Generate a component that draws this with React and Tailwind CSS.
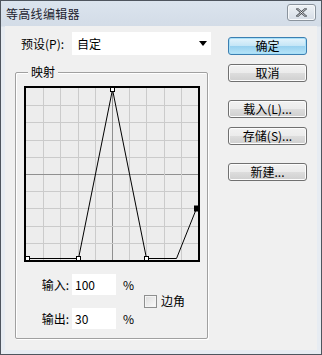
import React from "react";

const font = { fontFamily: '"Noto Sans CJK SC", "Liberation Sans", sans-serif' };

function Btn({ children, primary, className = "" }) {
  return (
    <div
      className={
        "flex h-[18px] w-[79px] items-center justify-center rounded-[3px] border text-[12px] leading-none text-black " +
        (primary
          ? "border-[#3c7fb1] bg-[linear-gradient(#e5f4fc,#c4e5f6_50%,#98d1ef_51%,#b7e4f8)] shadow-[inset_0_0_0_1px_#a8e0f8] "
          : "border-[#707070] bg-[linear-gradient(#f2f2f2,#ebebeb_50%,#dddddd_51%,#cfcfcf)] shadow-[inset_0_0_0_1px_#fcfcfc] ") +
        className
      }
    >
      {children}
    </div>
  );
}

function Graph() {
  const s = 172;
  const step = s / 10;
  const lines = [];
  for (let i = 1; i < 10; i++) {
    const p = Math.round(i * step) + 0.5;
    const c = i === 5 ? "#909090" : "#cbcbcb";
    lines.push(<line key={"v" + i} x1={p} y1={0} x2={p} y2={s} stroke={c} strokeWidth="1" />);
    lines.push(<line key={"h" + i} x1={0} y1={p} x2={s} y2={p} stroke={c} strokeWidth="1" />);
  }
  const pts = [
    [1.5, 170.5],
    [52.5, 170.5],
    [86.5, 1.5],
    [120.5, 170.5],
    [150.5, 170.5],
    [170.5, 120.5],
  ];
  return (
    <div className="h-[176px] w-[176px] border-2 border-black bg-[#ededed]">
      <svg width={s} height={s} viewBox={`0 0 ${s} ${s}`} className="block">
        {lines}
        <polyline
          points={pts.map((p) => p.join(",")).join(" ")}
          fill="none"
          stroke="#000"
          strokeWidth="1"
        />
        {[pts[0], pts[1], pts[2], pts[3]].map((p, i) => (
          <rect key={i} x={p[0] - 2} y={p[1] - 2} width="4" height="4" fill="#fff" stroke="#000" strokeWidth="1" />
        ))}
        <rect x={168} y={117.5} width="5" height="6" fill="#000" />
      </svg>
    </div>
  );
}

export default function App() {
  return (
    <div style={font} className="h-[355px] w-[322px] overflow-hidden bg-white">
      <div className="flex h-[355px] w-[322px] flex-col border border-[#4e555e] bg-[linear-gradient(#dbe4ee,#d3dce7_25px,#e7ecf2_26px,#e7ecf2)]">
        {/* title bar */}
        <div className="flex h-[25px] shrink-0 items-center justify-between pl-[5px] pr-[5px]">
          <span className="text-[12px] leading-none tracking-[0.3px] text-[#1e2430]">等高线编辑器</span>
          <div className="mb-[2px] flex h-[17px] w-[29px] items-center justify-center rounded-[3px] border border-[#8a939d] bg-[linear-gradient(#eef2f6,#d6dde6)] shadow-[inset_0_0_0_1px_#f6f8fa]">
            <svg width="11" height="9" viewBox="0 0 11 9">
              <path d="M1.5 1 L9.5 8 M9.5 1 L1.5 8" stroke="#3b4048" strokeWidth="2.2" strokeLinecap="square" />
              <path d="M1.5 1 L9.5 8 M9.5 1 L1.5 8" stroke="#ffffff" strokeWidth="0.8" strokeLinecap="square" />
            </svg>
          </div>
        </div>
        {/* content */}
        <div className="mx-[4px] mb-[4px] flex flex-1 bg-[#f0f0f0] text-[12px] text-black">
          {/* left */}
          <div className="ml-[10px] mt-[6px] w-[196px]">
            <div className="flex h-[23px] items-center">
              <span className="w-[57px] pl-[6px] leading-none">预设(P):</span>
              <div className="flex h-[23px] w-[139px] items-center justify-between bg-white pl-[5px] pr-[4px]">
                <span className="leading-none">自定</span>
                <svg width="8" height="5" viewBox="0 0 8 5">
                  <path d="M0 0 H8 L4 5 Z" fill="#000" />
                </svg>
              </div>
            </div>
            <div className="relative mt-[17px] h-[267px] w-[193px] rounded-[2px] border border-[#a0a0a0] shadow-[inset_1px_1px_0_#fff,1px_1px_0_#fff]">
              <span className="absolute left-[12px] top-[-8px] bg-[#f0f0f0] px-[3px] text-[12px] leading-[14px]">映射</span>
              <div className="ml-[8px] mt-[13px]">
                <Graph />
              </div>
              <div className="mt-[12px] flex">
                <div className="flex flex-col gap-[13px]">
                  <div className="flex h-[21px] items-center">
                    <span className="w-[56px] pr-[3px] text-right leading-none">输入:</span>
                    <div className="flex h-[21px] w-[44px] items-center bg-white pl-[3px] leading-none">100</div>
                    <span className="ml-[7px] leading-none">%</span>
                  </div>
                  <div className="flex h-[21px] items-center">
                    <span className="w-[56px] pr-[3px] text-right leading-none">输出:</span>
                    <div className="flex h-[21px] w-[44px] items-center bg-white pl-[3px] leading-none">30</div>
                    <span className="ml-[7px] leading-none">%</span>
                  </div>
                </div>
                <div className="ml-[10px] mt-[20px] flex h-[14px] items-center">
                  <div className="h-[13px] w-[13px] border border-[#8e8f8f] bg-[linear-gradient(135deg,#dcdcdc,#fbfbfb)] shadow-[inset_0_0_0_1px_#f4f4f4]" />
                  <span className="ml-[4px] leading-none">边角</span>
                </div>
              </div>
            </div>
          </div>
          {/* right */}
          <div className="ml-[17px] mt-[11px] flex flex-col">
            <Btn primary>确定</Btn>
            <Btn className="mt-[9px]">取消</Btn>
            <Btn className="mt-[18px]">载入(L)...</Btn>
            <Btn className="mt-[9px]">存储(S)...</Btn>
            <Btn className="mt-[18px]">新建...</Btn>
          </div>
        </div>
      </div>
    </div>
  );
}
